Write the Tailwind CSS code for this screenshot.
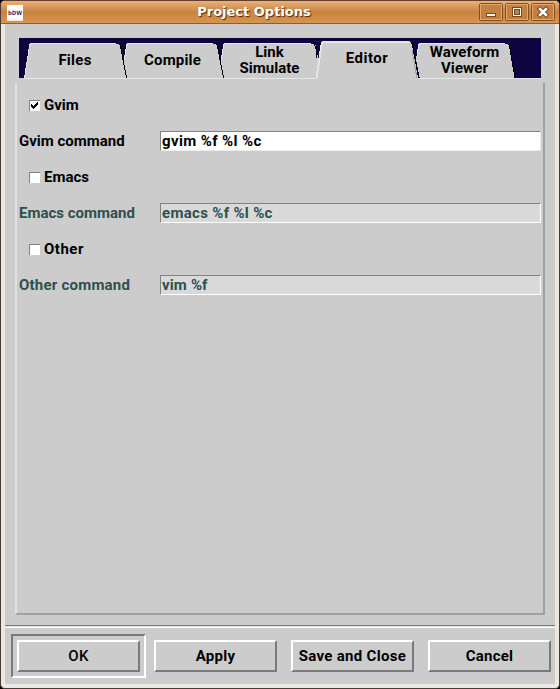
<!DOCTYPE html>
<html lang="en">
<head>
<meta charset="utf-8">
<title>Project Options</title>
<script src="https://cdn.jsdelivr.net/npm/@tailwindcss/browser@4"></script>
</head>
<body class="bg-black">
<div class="w-[560px] h-[689px] flex flex-col overflow-hidden rounded-[5px] border border-t-[#60402b] border-x-[#443b36] border-b-[#443b36] bg-[#eee8e2] font-['Roboto',sans-serif] font-bold text-[15px] leading-4 text-black">
  <header class="h-[23px] shrink-0 flex items-center border-b border-[#955b2a] bg-linear-to-b from-[#eab27b] via-[#c8833f] to-[#d99450] pl-1.5 pr-[4px]">
    <svg class="w-4 h-4 mt-[2px]" viewBox="0 0 16 16"><rect width="16" height="16" fill="#fff"/><rect y="14.500" width="16" height="1.500" fill="#eee6df"/><text x="1" y="9.500" font-family="DejaVu Sans" font-size="6" font-weight="bold" fill="#3d3569" textLength="14" lengthAdjust="spacingAndGlyphs">bDW</text></svg>
    <h1 class="flex-1 pl-[6px] text-center font-['DejaVu_Sans',sans-serif] text-[13px] text-white [text-shadow:1px_1px_1px_#4c2a10]">Project Options</h1>
    <div class="flex gap-[2px]">
      <svg class="w-6 h-[18px]" viewBox="0 0 24 18"><rect x=".5" y=".5" width="23" height="17" rx="1.500" fill="#c38040" stroke="#82501f"/><rect x="1.500" y="1.500" width="21" height="15" fill="none" stroke="#dda873"/><rect x="7.500" y="10.500" width="9" height="3" fill="#fff" stroke="#76471f"/></svg>
      <svg class="w-6 h-[18px]" viewBox="0 0 24 18"><rect x=".5" y=".5" width="23" height="17" rx="1.500" fill="#c38040" stroke="#82501f"/><rect x="1.500" y="1.500" width="21" height="15" fill="none" stroke="#dda873"/><rect x="7.500" y="4.500" width="9" height="9" fill="#fff" stroke="#76471f"/><rect x="9.500" y="6.500" width="5" height="5" fill="#c38040" stroke="#76471f"/></svg>
      <svg class="w-6 h-[18px]" viewBox="0 0 24 18"><rect x=".5" y=".5" width="23" height="17" rx="1.500" fill="#c38040" stroke="#82501f"/><rect x="1.500" y="1.500" width="21" height="15" fill="none" stroke="#dda873"/><path d="M9 6l6 6M15 6l-6 6" stroke="#76471f" stroke-width="4.500" stroke-linecap="square"/><path d="M9 6l6 6M15 6l-6 6" stroke="#fff" stroke-width="2.500" stroke-linecap="square"/></svg>
    </div>
  </header>
  <main class="mx-[4px] mb-[4px] flex-1 flex flex-col bg-[#cccccc]">
    <nav class="mt-[14px] ml-[14px] w-[522px] h-[41px] grid grid-cols-1 shrink-0">
      <svg class="col-start-1 row-start-1 w-[522px] h-[41px]" viewBox="19 38 522 41" fill="#ccc" shape-rendering="crispEdges">
        <rect x="19" y="38" width="522" height="40" fill="#0e0540"/>
        <path d="M24 79L29 46Q30 43.500 32 43.500H116Q119 43.500 120 46L127 79Z"/>
        <path d="M127 79L123.500 61L126 46Q127 43.500 129 43.500H213Q216 43.500 217 46L224 79Z"/>
        <path d="M224 79L220.500 61L223 46Q224 43.500 226 43.500H311Q315 43.500 316 46L318 58L317 79Z"/>
        <path d="M420 79L416 60L418 46Q419 43.500 421 43.500H505Q508 43.500 509 46L515 79Z"/>
        <g fill="none" stroke="#e5e5e5">
          <path d="M24.500 78L29.500 46Q30 43.500 32 43.500H116M124.500 60L126.500 46Q127 43.500 129 43.500H213M221.500 60L223.500 46Q224 43.500 226 43.500H311M417 56L418.500 46Q419 43.500 421 43.500H505"/>
          <path d="M24 78.500H317M419 78.500H541"/>
        </g>
        <g fill="none" stroke="#000"><path d="M118 43.500Q120.500 44 121 49L126.500 78M215 43.500Q217.500 44 218 49L223.500 78M313 43.500Q316.500 44 317 58M507 43.500Q509.500 44 510 49L515 78"/></g>
        <path d="M316 79L321 44Q322 41 324 41H408Q411 41 412 44L419 79Z"/>
        <path d="M316.500 78L321.500 45Q322 42 324 42H409" fill="none" stroke="#e5e5e5" stroke-width="2"/>
        <path d="M410 41.500Q412.500 42 413 48L418.500 78" fill="none" stroke="#000"/>
        <path d="M412 50L417 78" fill="none" stroke="#a0a0a0"/>
      </svg>
      <div class="col-start-1 row-start-1 flex items-center text-center pl-[7px]">
        <span class="w-[98px] pt-[3px] tracking-[.25px]">Files</span>
        <span class="w-[97px] pt-[3px] tracking-[.15px]">Compile</span>
        <span class="w-[97px] pt-[3px]">Link<br>Simulate</span>
        <span class="w-[98px] pb-[1px] tracking-[.5px]">Editor</span>
        <span class="w-[97px] pt-[3px] tracking-[.1px]">Waveform<br>Viewer</span>
      </div>
    </nav>
    <section class="mt-[4px] ml-[10px] w-[530px] h-[532px] shrink-0 border-2 border-t-0 border-l-[#e2e2e2] border-r-[#a0a0a0] border-b-[#a0a0a0] pt-[4px] pl-[2px] pr-[2px]">
      <label class="h-9 flex items-center pl-[10px] gap-1"><svg class="w-[11px] h-[11px]" viewBox="0 0 11 11" shape-rendering="crispEdges"><rect width="11" height="11" fill="#fff"/><path d="M0 .5H11M.5 0V11" stroke="#828282"/><path d="M2 4h1v1h1v1h1V5h1V4h1V3h1V2h1v3H8v1H7v1H6v1H5v1H4V8H3V7H2z"/></svg>Gvim</label>
      <div class="h-9 flex items-center"><span class="w-[141px]">Gvim command</span><span class="flex-1 h-5 pl-[1px] leading-[18px] tracking-[.38px] bg-white border border-t-[#828282] border-l-[#828282] border-r-[#ececec] border-b-[#ececec]">gvim %f %l %c</span></div>
      <label class="h-9 flex items-center pl-[10px] gap-1"><span class="w-[11px] h-[11px] bg-white border-t border-l border-[#828282]"></span>Emacs</label>
      <div class="h-9 flex items-center text-[#2f4f4f]"><span class="w-[141px]">Emacs command</span><span class="flex-1 h-5 pl-[1px] leading-[18px] tracking-[.32px] bg-[#d9d9d9] border border-t-[#828282] border-l-[#828282] border-r-white border-b-white">emacs %f %l %c</span></div>
      <label class="h-9 flex items-center pl-[10px] gap-1 tracking-[.5px]"><span class="w-[11px] h-[11px] bg-white border-t border-l border-[#828282]"></span>Other</label>
      <div class="h-9 flex items-center text-[#2f4f4f]"><span class="w-[141px] tracking-[.22px]">Other command</span><span class="flex-1 h-5 pl-[1px] leading-[18px] tracking-[.15px] bg-[#d9d9d9] border border-t-[#828282] border-l-[#828282] border-r-white border-b-white">vim %f</span></div>
    </section>
    <footer class="mt-[10px] flex-1 border-t border-[#7a7a7a]">
      <div class="h-[2px] bg-[#e0e0e0] border-b border-white"></div>
      <div class="pt-[6px] pl-[6px] pr-[4px] flex items-center justify-between">
        <div class="w-[135px] h-[44px] p-[4px] border-2 border-t-[#7a7a7a] border-l-[#7a7a7a] border-r-white border-b-white"><button class="block w-[123px] h-8 border-2 border-t-white border-l-white border-r-[#7a7a7a] border-b-[#7a7a7a] font-medium tracking-[.3px]">OK</button></div>
        <div class="w-[397px] flex justify-between">
        <button class="w-[123px] h-8 border-2 border-t-white border-l-white border-r-[#7a7a7a] border-b-[#7a7a7a] tracking-[.3px]">Apply</button>
        <button class="w-[123px] h-8 border-2 border-t-white border-l-white border-r-[#7a7a7a] border-b-[#7a7a7a] tracking-[.3px]">Save and Close</button>
        <button class="w-[123px] h-8 border-2 border-t-white border-l-white border-r-[#7a7a7a] border-b-[#7a7a7a] tracking-[.2px]">Cancel</button>
        </div>
      </div>
    </footer>
  </main>
</div>
</body>
</html>
